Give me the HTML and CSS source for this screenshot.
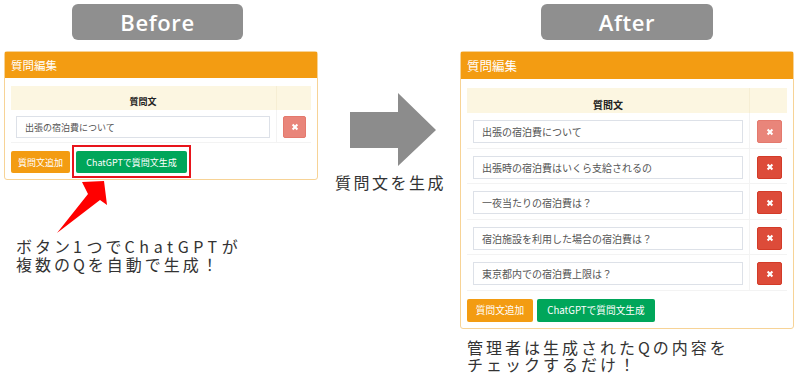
FILE: index.html
```html
<!DOCTYPE html>
<html lang="ja">
<head>
<meta charset="utf-8">
<link rel="stylesheet" href="styles.css">
</head>
<body>
<div class="page">
  <section class="col col-before">
    <div class="tag tag-before">Before</div>
    <div class="card card-s">
      <div class="card-head">質問編集</div>
      <div class="card-body">
        <div class="qtable">
          <div class="qrow qhead"><div class="c1">質問文</div><div class="c2"></div></div>
          <div class="qrow"><div class="c1"><div class="input">出張の宿泊費について</div></div><div class="c2"><span class="del del-off"><svg viewBox="0 0 10 10"><path d="M2 2L8 8M8 2L2 8"/></svg></span></div></div>
        </div>
        <div class="actions">
          <span class="btn btn-add">質問文追加</span>
          <span class="btn btn-gpt hl">ChatGPTで質問文生成</span>
        </div>
      </div>
    </div>
    <p class="note note-before"><span class="line">ボタン<span class="lat">1</span>つで<span class="lat">ChatGPT</span>が</span><span class="line">複数のQを自動で生成！</span></p>
    <svg class="red-arrow" viewBox="0 0 62 60" width="62" height="60"><polygon points="3,55 34,16 28,4 50,3 53,27 46,22"/></svg>
  </section>

  <section class="col col-mid">
    <svg class="big-arrow" viewBox="0 0 90 74" width="90" height="74"><polygon points="2,19 50,19 50,0 88,37 50,73 50,55 2,55"/></svg>
    <p class="mid-text">質問文を生成</p>
  </section>

  <section class="col col-after">
    <div class="tag tag-after">After</div>
    <div class="card card-l">
      <div class="card-head">質問編集</div>
      <div class="card-body">
        <div class="qtable">
          <div class="qrow qhead"><div class="c1">質問文</div><div class="c2"></div></div>
          <div class="qrow"><div class="c1"><div class="input">出張の宿泊費について</div></div><div class="c2"><span class="del del-off"><svg viewBox="0 0 10 10"><path d="M2 2L8 8M8 2L2 8"/></svg></span></div></div>
          <div class="qrow"><div class="c1"><div class="input">出張時の宿泊費はいくら支給されるの</div></div><div class="c2"><span class="del"><svg viewBox="0 0 10 10"><path d="M2 2L8 8M8 2L2 8"/></svg></span></div></div>
          <div class="qrow"><div class="c1"><div class="input">一夜当たりの宿泊費は？</div></div><div class="c2"><span class="del"><svg viewBox="0 0 10 10"><path d="M2 2L8 8M8 2L2 8"/></svg></span></div></div>
          <div class="qrow"><div class="c1"><div class="input">宿泊施設を利用した場合の宿泊費は？</div></div><div class="c2"><span class="del"><svg viewBox="0 0 10 10"><path d="M2 2L8 8M8 2L2 8"/></svg></span></div></div>
          <div class="qrow"><div class="c1"><div class="input">東京都内での宿泊費上限は？</div></div><div class="c2"><span class="del"><svg viewBox="0 0 10 10"><path d="M2 2L8 8M8 2L2 8"/></svg></span></div></div>
        </div>
        <div class="actions">
          <span class="btn btn-add">質問文追加</span>
          <span class="btn btn-gpt">ChatGPTで質問文生成</span>
        </div>
      </div>
    </div>
    <p class="note note-after"><span class="line">管理者は生成されたQの内容を</span><span class="line">チェックするだけ！</span></p>
  </section>
</div>
</body>
</html>
```

FILE: styles.css
```css
* { box-sizing: border-box; }
html, body { margin: 0; padding: 0; background: #fff; }
body {
  font-family: "Noto Sans CJK JP", "Noto Sans", sans-serif;
  color: #333;
  width: 800px;
  height: 380px;
  overflow: hidden;
}
.page {
  display: flex;
  padding-left: 4px;
}
.col { position: relative; display: flex; flex-direction: column; }
.col-before { width: 314px; }
.col-mid { width: 142px; }
.col-after { width: 334px; }

.tag {
  margin-top: 4px;
  height: 36px;
  background: #8f8f8f;
  border-radius: 6px;
  color: #fff;
  font-family: "Open Sans", "Noto Sans", sans-serif;
  font-weight: 600;
  font-size: 22px;
  letter-spacing: 0.6px;
  display: flex;
  align-items: center;
  justify-content: center;
}
.tag-before { margin-left: 68px; width: 171px; }
.tag-after { margin-left: 81px; width: 172px; }

.card {
  margin-top: 11px;
  border: 1px solid #f7d396;
  border-radius: 3px;
  background: #fff;
}
.card-head {
  background: #f39c12;
  color: #fff;
  display: flex;
  align-items: center;
}
.card-s .card-head { height: 26px; font-size: 11.5px; padding-left: 6px; }
.card-l .card-head { height: 27px; font-size: 12.5px; padding-left: 6px; }

.card-s .card-body { padding: 8px 6px 6px; }
.card-l .card-body { padding: 9px 6px 6px; }

.qtable { display: flex; flex-direction: column; }
.qrow { display: grid; border-bottom: 1px solid #f3f3f3; }
.card-s .qrow { grid-template-columns: 1fr 35px; }
.card-l .qrow { grid-template-columns: 1fr 38px; }
.qrow .c2 { border-left: 1px solid #f3f3f3; }
.qhead { background: #fcf6e1; border-bottom: 0; }
.qhead .c1 {
  display: flex; align-items: center; justify-content: center;
  font-weight: 700; color: #222;
}
.qhead .c2 { border-left-color: #f6eed4; }
.card-s .qhead { height: 24px; }
.card-s .qhead .c1 { font-size: 9px; }
.card-l .qhead { height: 25px; }
.card-l .qhead .c1 { font-size: 10px; }

.input {
  border: 1px solid #dde1e8;
  background: #fff;
  color: #555;
  display: flex;
  align-items: center;
}
.card-s .qrow:not(.qhead) { height: 33px; }
.card-s .c1 { padding: 6px 6px 0 5px; }
.card-s .input { height: 22px; font-size: 9px; padding-left: 8px; }
.card-s .c2 { padding: 6px 0 0 6px; }
.card-s .del { width: 23px; height: 22px; }

.card-l .qrow:not(.qhead) { height: 35.6px; }
.card-l .c1 { padding: 7px 6px 0 6px; }
.card-l .input { height: 23px; font-size: 10px; padding-left: 8px; }
.card-l .c2 { padding: 7px 0 0 7px; }
.card-l .del { width: 25px; height: 23px; }

.del {
  display: flex; align-items: center; justify-content: center;
  background: #dd4b39;
  border: 1px solid #d33b28;
  border-radius: 2px;
}
.del-off { background: #e9857a; border-color: #e4796d; }
.del svg { width: 8px; height: 8px; }
.del path { stroke: #fff; stroke-width: 2.6; fill: none; }

.actions { display: flex; }
.btn {
  display: flex; align-items: center; justify-content: center;
  color: #fff;
  border-radius: 2px;
}
.btn-add { background: #f39c12; }
.btn-gpt { background: #00a65a; }
.card-s .actions { margin-top: 8px; gap: 6px; }
.card-s .btn { height: 22px; font-size: 9px; }
.card-s .btn-add { width: 59px; }
.card-s .btn-gpt { width: 111px; }
.card-l .actions { margin-top: 8px; gap: 4px; }
.card-l .btn { height: 23px; font-size: 9.7px; }
.card-l .btn-add { width: 66px; }
.card-l .btn-gpt { width: 118px; }

.hl { position: relative; }
.hl::after {
  content: "";
  position: absolute;
  left: -4px; right: -4px; top: -6px; bottom: -5px;
  border: 2px solid #e8141b;
}

.note {
  margin: 0;
  font-size: 16px;
  letter-spacing: 3px;
  color: #333;
  white-space: nowrap;
  display: flex;
  flex-direction: column;
}
.note .line { display: block; height: 18px; line-height: 18px; }
.note .lat { letter-spacing: 4.6px; }
.note-before { margin-top: 57px; margin-left: 12px; }
.note-after { margin-top: 10px; margin-left: 7px; }
.note-after .line { height: 17px; line-height: 17px; }

.red-arrow { position: absolute; left: 50px; top: 178px; }
.red-arrow polygon { fill: #ff0000; }

.big-arrow { margin-top: 93px; margin-left: 30px; }
.big-arrow polygon { fill: #8c8c8c; }
.mid-text {
  margin: 5px 0 0 17px;
  font-size: 16px;
  letter-spacing: 2.5px;
  line-height: 20px;
  white-space: nowrap;
}
```
